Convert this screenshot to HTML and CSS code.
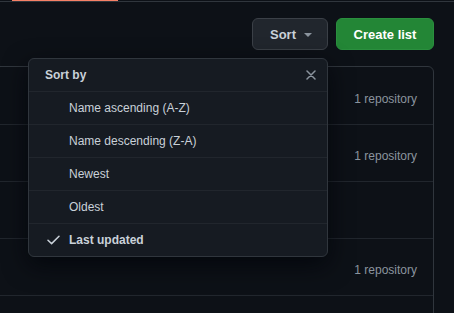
FILE: index.html
```html
<!DOCTYPE html>
<html>
<head>
<meta charset="utf-8">
<link rel="stylesheet" href="styles.css">
</head>
<body>
<div class="page">
  <div class="tabbar"><span class="tab-active"></span></div>
  <div class="toolbar">
    <button class="btn btn-sort">Sort <span class="caret"></span></button>
    <button class="btn btn-primary">Create list</button>
  </div>
  <div class="lists">
    <div class="list-row"><span class="count">1 repository</span></div>
    <div class="list-row"><span class="count">1 repository</span></div>
    <div class="list-row"></div>
    <div class="list-row"><span class="count">1 repository</span></div>
    <div class="list-row"></div>
  </div>

  <div class="menu">
    <div class="menu-header">
      <span class="menu-title">Sort by</span>
      <svg class="close" width="10" height="10" viewBox="0 0 10 10"><path d="M1 1L9 9M9 1L1 9" stroke="#8b949e" stroke-width="1.5" stroke-linecap="round"/></svg>
    </div>
    <div class="menu-item"><span class="check"></span><span>Name ascending (A-Z)</span></div>
    <div class="menu-item"><span class="check"></span><span>Name descending (Z-A)</span></div>
    <div class="menu-item"><span class="check"></span><span>Newest</span></div>
    <div class="menu-item"><span class="check"></span><span>Oldest</span></div>
    <div class="menu-item selected"><span class="check"><svg width="13" height="10" viewBox="0 0 13 10"><path d="M1 5.2L4.6 8.6L12 1.2" fill="none" stroke="#c9d1d9" stroke-width="1.5" stroke-linecap="round" stroke-linejoin="round"/></svg></span><span>Last updated</span></div>
  </div>
</div>
</body>
</html>
```

FILE: styles.css
```css
* { box-sizing: border-box; }
html, body {
  margin: 0;
  padding: 0;
  background: #0d1117;
  font-family: "Liberation Sans", Arial, sans-serif;
  color: #c9d1d9;
  overflow: hidden;
}
.page {
  position: relative;
  width: 454px;
  height: 313px;
  overflow: hidden;
}
.tabbar {
  height: 2px;
  border-bottom: 1px solid #30363d;
  position: relative;
}
.tab-active {
  display: block;
  margin-left: 12px;
  width: 106px;
  height: 1px;
  background: #f78166;
}
.toolbar {
  display: flex;
  justify-content: flex-end;
  gap: 8px;
  padding: 16px 20px 0 0;
}
.btn {
  height: 32px;
  border-radius: 6px;
  font-family: "Liberation Sans", Arial, sans-serif;
  font-size: 13px;
  font-weight: bold;
  display: flex;
  align-items: center;
  justify-content: center;
  padding: 0;
  cursor: pointer;
}
.btn-sort {
  width: 76px;
  background: #21262d;
  border: 1px solid #3b4047;
  color: #c9d1d9;
  gap: 8px;
  padding-left: 2px;
}
.caret {
  width: 0;
  height: 0;
  border-left: 4px solid transparent;
  border-right: 4px solid transparent;
  border-top: 4px solid #8b949e;
  margin-top: 1px;
}
.btn-primary {
  width: 98px;
  background: #238636;
  border: 1px solid #2a8f3e;
  color: #ffffff;
}
.lists {
  margin: 16px 20px 0 -10px;
  border: 1px solid #30363d;
  border-radius: 6px;
}
.list-row {
  height: 57px;
  border-bottom: 1px solid #21262d;
  display: flex;
  align-items: center;
  justify-content: flex-end;
  padding: 5px 16px 0 0;
}
.list-row:first-child { height: 58px; padding-top: 6px; }
.count {
  font-size: 12px;
  color: #8b949e;
}
.menu {
  position: absolute;
  left: 28px;
  top: 58px;
  width: 300px;
  background: #161b22;
  border: 1px solid #30363d;
  border-radius: 6px;
  box-shadow: 0 8px 24px rgba(1, 4, 9, 0.75);
}
.menu-header {
  height: 33px;
  display: flex;
  align-items: center;
  justify-content: space-between;
  padding: 0 11px 0 16px;
  border-bottom: 1px solid #21262d;
}
.menu-title {
  font-size: 12px;
  font-weight: bold;
  color: #c9d1d9;
}
.close { display: block; }
.menu-item {
  height: 33px;
  display: flex;
  align-items: center;
  padding-left: 18px;
  font-size: 12px;
  color: #c9d1d9;
  border-bottom: 1px solid #21262d;
}
.menu-item:last-child { border-bottom: none; height: 32px; }
.check {
  width: 22px;
  display: flex;
  align-items: center;
}
.selected { font-weight: bold; }
```
